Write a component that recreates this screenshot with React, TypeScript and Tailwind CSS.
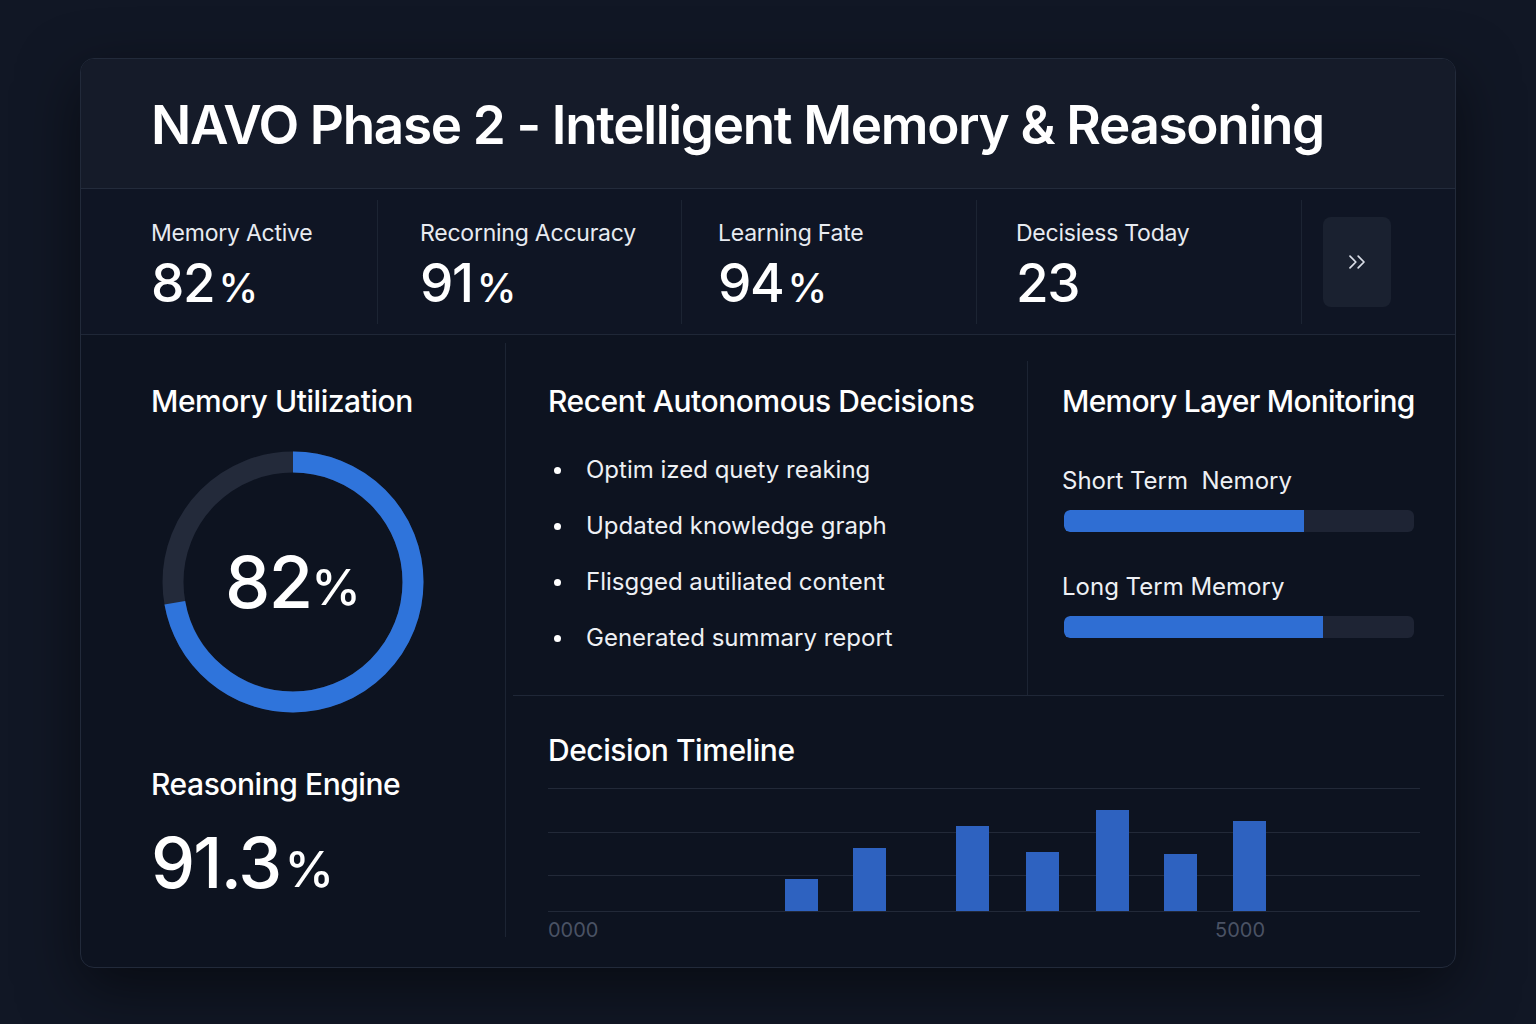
import { ChevronsRight } from "lucide-react";

const stats = [
  { label: "Memory Active", value: "82", unit: "%", w: "w-[296px]", pl: "pl-[70px]" },
  { label: "Recorning Accuracy", value: "91", unit: "%", w: "w-[304px]", pl: "pl-[42px]" },
  { label: "Learning Fate", value: "94", unit: "%", w: "w-[295px]", pl: "pl-[36px]" },
  { label: "Decisiess Today", value: "23", unit: "", w: "w-[325px]", pl: "pl-[39px]" },
];

const decisions = [
  "Optim ized quety reaking",
  "Updated knowledge graph",
  "Flisgged autiliated content",
  "Generated summary report",
];

const layers = [
  { label: "Short Term  Nemory", pct: 68.5 },
  { label: "Long Term Memory", pct: 74 },
];

// bar x-offsets from chart left, heights in px
const bars = [
  { x: 237, h: 32 },
  { x: 305, h: 63 },
  { x: 408, h: 85 },
  { x: 478, h: 59 },
  { x: 548, h: 101 },
  { x: 616, h: 57 },
  { x: 685, h: 90 },
];

function Donut({ pct }: { pct: number }) {
  const r = 120;
  const c = 2 * Math.PI * r;
  return (
    <div className="relative w-[262px] h-[262px]">
      <svg width="262" height="262" viewBox="0 0 262 262">
        <circle cx="131" cy="131" r={r} fill="none" stroke="#232a3a" strokeWidth="21" />
        <circle
          cx="131"
          cy="131"
          r={r}
          fill="none"
          stroke="#2f74db"
          strokeWidth="21"
          strokeDasharray={`${c * pct} ${c}`}
          transform="rotate(-90 131 131)"
        />
      </svg>
      <div className="absolute inset-0 flex items-center justify-center text-white">
        <span className="text-[72px] leading-none font-medium tracking-tight">82</span>
        <span className="text-[50px] leading-none font-medium mt-[10px]">%</span>
      </div>
    </div>
  );
}

export default function App() {
  return (
    <div
      className="min-h-screen bg-[#111725] pt-[58px] pb-[56px] text-white"
      style={{ fontFamily: "Inter, 'Noto Sans', sans-serif" }}
    >
      <div className="mx-auto w-[1376px] h-[910px] rounded-[14px] border border-[#222a3a] bg-[#0d1320] overflow-hidden shadow-[0_20px_60px_rgba(0,0,0,0.5)] flex flex-col">
        {/* header */}
        <div className="h-[130px] shrink-0 bg-[#151b29] border-b border-[#232b3b] flex items-center pl-[70px]">
          <h1 className="text-[53px] font-semibold tracking-[-0.025em] leading-none pt-[4px] whitespace-nowrap">
            NAVO Phase 2 - Intelligent Memory &amp; Reasoning
          </h1>
        </div>

        {/* stats */}
        <div className="h-[146px] shrink-0 flex items-center border-b border-[#1f2737] bg-[#0f1524]">
          {stats.map((s, i) => (
            <div key={s.label} className={`${s.w} h-full flex items-center`}>
              {i > 0 && <div className="w-px h-[124px] bg-[#1c2433] self-center" />}
              <div className={`${s.pl} flex flex-col pt-[6px]`}>
                <span className="text-[23px] leading-[28px] text-[#e8ebf1] tracking-[-0.01em]">{s.label}</span>
                <span className="mt-[10px] flex items-end leading-none">
                  <span className="text-[53px] font-medium tracking-tight">{s.value}</span>
                  {s.unit && <span className="text-[40px] font-medium ml-[4px] mb-[2px]">{s.unit}</span>}
                </span>
              </div>
            </div>
          ))}
          <div className="w-px h-[124px] bg-[#1c2433]" />
          <div className="ml-[21px] w-[68px] h-[90px] rounded-[8px] bg-[#1a2130] flex items-center justify-center">
            <ChevronsRight size={28} strokeWidth={1.5} className="text-[#d9dde6]" />
          </div>
        </div>

        {/* body */}
        <div className="flex-1 flex">
          {/* left */}
          <div className="w-[425px] shrink-0 flex flex-col pt-[48px] pl-[70px] relative">
            <h2 className="text-[30px] leading-[36px] font-medium tracking-[-0.015em]">Memory Utilization</h2>
            <div className="mt-[32px] ml-[11px]">
              <Donut pct={0.722} />
            </div>
            <h2 className="mt-[53px] text-[30px] leading-[36px] font-medium tracking-[-0.015em]">Reasoning Engine</h2>
            <div className="mt-[26px] flex items-end leading-none">
              <span className="text-[70px] font-medium tracking-tight">91.3</span>
              <span className="text-[50px] font-medium ml-[4px] mb-[4px]">%</span>
            </div>
            <div className="absolute right-0 top-[8px] bottom-[30px] w-px bg-[#1c2433]" />
          </div>

          {/* right area */}
          <div className="flex-1 flex flex-col">
            <div className="h-[361px] flex border-b border-[#1f2737] ml-[7px] mr-[11px]">
              <div className="w-[515px] pl-[35px] pt-[48px] relative">
                <h2 className="text-[30px] leading-[36px] font-medium tracking-[-0.015em] whitespace-nowrap">Recent Autonomous Decisions</h2>
                <ul className="mt-[36px] flex flex-col gap-[26px]">
                  {decisions.map((d) => (
                    <li key={d} className="flex items-center text-[24px] leading-[30px] text-[#eef0f4]">
                      <span className="w-[7px] h-[7px] rounded-full bg-white ml-[6px] mr-[25px]" />
                      {d}
                    </li>
                  ))}
                </ul>
                <div className="absolute right-0 top-[26px] bottom-0 w-px bg-[#1c2433]" />
              </div>
              <div className="flex-1 pl-[34px] pt-[48px]">
                <h2 className="text-[30px] leading-[36px] font-medium tracking-[-0.025em] whitespace-nowrap">Memory Layer Monitoring</h2>
                <div className="mt-[47px] flex flex-col">
                  {layers.map((l, i) => (
                    <div key={l.label} className={i > 0 ? "mt-[40px]" : ""}>
                      <div className="text-[24px] leading-[30px] text-[#eef0f4] whitespace-pre">{l.label}</div>
                      <div className="mt-[14px] ml-[2px] h-[22px] w-[350px] rounded-[6px] bg-[#1e2434] overflow-hidden">
                        <div className="h-full rounded-l-[6px] bg-[#2f6ed3]" style={{ width: `${l.pct}%` }} />
                      </div>
                    </div>
                  ))}
                </div>
              </div>
            </div>

            {/* timeline */}
            <div className="flex-1 pl-[42px] pt-[36px]">
              <h2 className="text-[30px] leading-[36px] font-medium tracking-[-0.015em]">Decision Timeline</h2>
              <svg width="872" height="124" viewBox="0 0 872 124" className="mt-[20px] block">
                {[0, 44, 87, 123].map((y) => (
                  <line key={y} x1="0" x2="872" y1={y + 0.5} y2={y + 0.5} stroke="#222938" strokeWidth="1" />
                ))}
                {bars.map((b) => (
                  <rect key={b.x} x={b.x} y={123 - b.h} width="33" height={b.h} fill="#2e62c0" />
                ))}
              </svg>
              <div className="relative mt-[3px] h-[24px] text-[20px] text-[#4a5264]">
                <span className="absolute left-0 top-0">0000</span>
                <span className="absolute left-[667px] top-0">5000</span>
              </div>
            </div>
          </div>
        </div>
      </div>
    </div>
  );
}
